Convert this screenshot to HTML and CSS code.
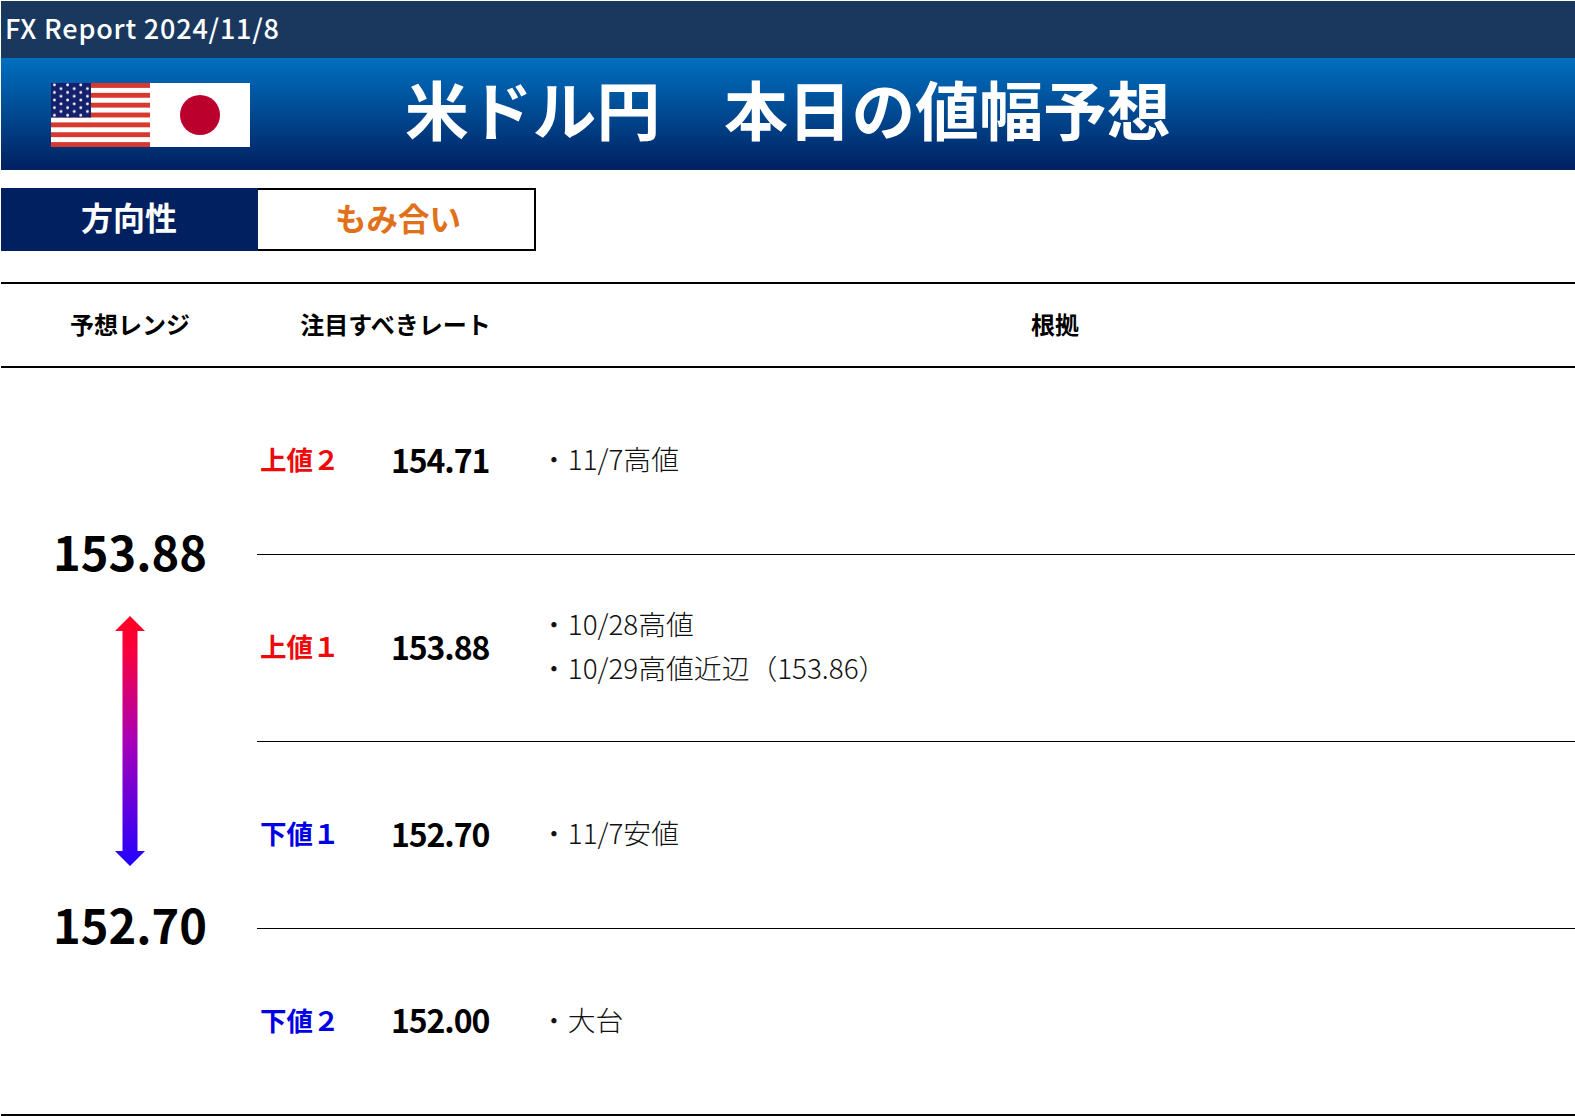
FILE: index.html
```html
<!DOCTYPE html>
<html lang="ja">
<head>
<meta charset="utf-8">
<title>FX Report</title>
<link rel="stylesheet" href="styles.css">
</head>
<body>
<div class="page">
  <div class="topbar">FX Report 2024/11/8</div>
  <header class="banner">
    <svg class="flags" width="199" height="64" viewBox="0 0 199 64" aria-hidden="true">
      <defs>
        <pattern id="stars" width="13.2" height="7.6" patternUnits="userSpaceOnUse" x="0" y="0">
          <circle cx="3.4" cy="1.9" r="1.4" fill="#fff"/>
          <circle cx="10" cy="5.7" r="1.4" fill="#fff"/>
        </pattern>
      </defs>
      <rect x="0" y="0" width="99" height="64" fill="#fff"/>
      <g fill="#d8392e">
        <rect y="0" width="99" height="4.9"/>
        <rect y="9.85" width="99" height="4.9"/>
        <rect y="19.7" width="99" height="4.9"/>
        <rect y="29.55" width="99" height="4.9"/>
        <rect y="39.4" width="99" height="4.9"/>
        <rect y="49.25" width="99" height="4.9"/>
        <rect y="59.1" width="99" height="4.9"/>
      </g>
      <rect width="40" height="34.5" fill="#14206c"/>
      <rect width="40" height="34.5" fill="url(#stars)"/>
      <rect x="99" width="100" height="64" fill="#fff"/>
      <circle cx="149" cy="32" r="20" fill="#bc002d"/>
    </svg>
    <h1 class="title">米ドル円　本日の値幅予想</h1>
  </header>
  <div class="direction">
    <div class="dir-label">方向性</div>
    <div class="dir-value">もみ合い</div>
  </div>
  <div class="table-head">
    <div class="th th-range">予想レンジ</div>
    <div class="th th-rate">注目すべきレート</div>
    <div class="th th-basis">根拠</div>
  </div>
  <div class="table-body">
    <div class="range">
      <div class="range-num">153.88</div>
      <svg class="arrow" width="30" height="250" viewBox="0 0 30 250" aria-hidden="true">
        <defs>
          <linearGradient id="arrowgrad" x1="0" y1="0" x2="0" y2="1">
            <stop offset="0" stop-color="#ff0020"/>
            <stop offset="0.15" stop-color="#f80040"/>
            <stop offset="0.5" stop-color="#a800b8"/>
            <stop offset="1" stop-color="#2200ff"/>
          </linearGradient>
        </defs>
        <path d="M15 0 L30 15 L22.5 15 L22.5 235 L30 235 L15 250 L0 235 L7.5 235 L7.5 15 L0 15 Z" fill="url(#arrowgrad)"/>
      </svg>
      <div class="range-num">152.70</div>
    </div>
    <div class="rows">
      <div class="row">
        <div class="label up">上値２</div>
        <div class="price">154.71</div>
        <ul class="notes"><li>・11/7高値</li></ul>
      </div>
      <div class="row">
        <div class="label up">上値１</div>
        <div class="price">153.88</div>
        <ul class="notes"><li>・10/28高値</li><li>・10/29高値近辺（153.86）</li></ul>
      </div>
      <div class="row">
        <div class="label down">下値１</div>
        <div class="price">152.70</div>
        <ul class="notes"><li>・11/7安値</li></ul>
      </div>
      <div class="row">
        <div class="label down">下値２</div>
        <div class="price">152.00</div>
        <ul class="notes"><li>・大台</li></ul>
      </div>
    </div>
  </div>
</div>
</body>
</html>
```

FILE: styles.css
```css
* { box-sizing: border-box; }
html, body { margin: 0; padding: 0; background: #fff; }
body {
  font-family: "Noto Sans CJK JP", "Noto Sans", sans-serif;
  color: #000;
  overflow: hidden;
}
.page {
  width: 1575px;
  height: 1116px;
  padding: 1px 0 0 1px;
}
.topbar {
  height: 57px;
  background: #1a385e;
  color: #fff;
  font-size: 27px;
  font-weight: 500;
  letter-spacing: 0.8px;
  line-height: 53px;
  padding-left: 4px;
}
.banner {
  height: 112px;
  background: linear-gradient(#0070c0 0%, #002060 100%);
  display: flex;
  align-items: center;
  padding-left: 50px;
}
.flags { display: block; flex: none; margin-top: 2px; }
.title {
  margin: 0 0 12px 155px;
  color: #fff;
  font-size: 63.8px;
  font-weight: 700;
  line-height: 1;
  white-space: nowrap;
}
.direction {
  display: flex;
  height: 63px;
  margin-top: 18px;
}
.dir-label {
  width: 257px;
  background: #002060;
  color: #fff;
  font-size: 32px;
  font-weight: 700;
  padding: 0 1px 7px 0;
  display: flex;
  align-items: center;
  justify-content: center;
}
.dir-value {
  width: 278px;
  border: 2px solid #000;
  border-left: 0;
  color: #e0701a;
  font-size: 31.5px;
  font-weight: 700;
  padding: 0 0 5px 4px;
  display: flex;
  align-items: center;
  justify-content: center;
}
.table-head {
  display: flex;
  align-items: center;
  height: 86px;
  margin-top: 31px;
  padding-bottom: 4px;
  border-top: 2px solid #000;
  border-bottom: 2px solid #000;
}
.th { font-size: 24px; font-weight: 700; text-align: center; }
.th-range { width: 258px; }
.th-rate { width: 273px; }
.th-basis { flex: 1; padding-left: 3px; }
.table-body {
  display: flex;
  height: 748px;
  border-bottom: 2px solid #000;
}
.range {
  width: 256px;
  flex: none;
  display: flex;
  flex-direction: column;
  align-items: center;
  padding: 147px 0 0 2px;
}
.range-num {
  font-size: 47px;
  font-weight: 700;
  line-height: 72px;
  height: 72px;
}
.arrow { display: block; margin: 29px 0 22px; }
.rows { flex: 1; display: flex; flex-direction: column; }
.row {
  height: 187px;
  display: flex;
  align-items: center;
  border-bottom: 1px solid #000;
}
.row:last-child { flex: 1; height: auto; border-bottom: 0; }
.label {
  width: 134px;
  padding: 0 0 5px 3px;
  font-size: 26.5px;
  font-weight: 700;
}
.up { color: #ee0a0a; }
.down { color: #0000e6; }
.price {
  width: 149px;
  font-size: 32px;
  font-weight: 700;
  letter-spacing: -1.1px;
  padding-bottom: 5px;
}
.notes {
  list-style: none;
  margin: 0;
  padding: 0 0 6px;
  font-size: 27.8px;
  font-weight: 300;
  line-height: 44px;
  color: #111;
}
```
